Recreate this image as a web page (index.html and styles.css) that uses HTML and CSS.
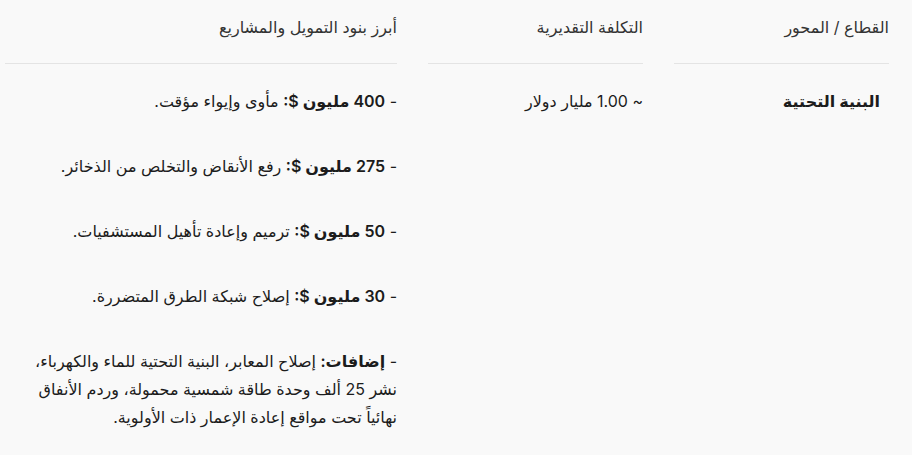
FILE: index.html
```html
<!DOCTYPE html>
<html lang="ar" dir="rtl">
<head>
    <meta charset="UTF-8">
    <meta name="viewport" content="width=device-width, initial-scale=1.0">
    <title>خطة التمويل</title>
    <link rel="stylesheet" href="styles.css">
</head>
<body>
    <div class="sheet">
        <div class="head">القطاع / المحور</div>
        <div class="head">التكلفة التقديرية</div>
        <div class="head">أبرز بنود التمويل والمشاريع</div>

        <div class="cell sector"><strong>البنية التحتية</strong></div>
        <div class="cell">~ 1.00 مليار دولار</div>
        <div class="cell items">
            <p>- <strong>400 مليون $:</strong> مأوى وإيواء مؤقت.</p>
            <p>- <strong>275 مليون $:</strong> رفع الأنقاض والتخلص من الذخائر.</p>
            <p>- <strong>50 مليون $:</strong> ترميم وإعادة تأهيل المستشفيات.</p>
            <p>- <strong>30 مليون $:</strong> إصلاح شبكة الطرق المتضررة.</p>
            <p>- <strong>إضافات:</strong> إصلاح المعابر، البنية التحتية للماء والكهرباء، نشر 25 ألف وحدة طاقة شمسية محمولة، وردم الأنفاق نهائياً تحت مواقع إعادة الإعمار ذات الأولوية.</p>
        </div>
    </div>
</body>
</html>
```

FILE: styles.css
```css
body{
    margin:0;
    background:#f9f9f9;
    color:#1c1c1c;
    font-family: Inter, "DejaVu Sans", sans-serif;
    font-size:16px;
    line-height:1.75;
}
.sheet{
    display:grid;
    grid-template-columns: 215px 215px 1fr;
    column-gap:31px;
    padding:0 23px 0 5px;
}
.head{
    padding:13px 0 22px;
    border-bottom:1px solid #e4e4e4;
    color:#333;
}
.cell{
    padding-top:23px;
}
.sector{
    padding-right:9px;
}
strong{
    font-weight:600;
}
.items p{
    margin:0 0 37px;
}
.items p:last-child{
    margin-bottom:0;
}
```
